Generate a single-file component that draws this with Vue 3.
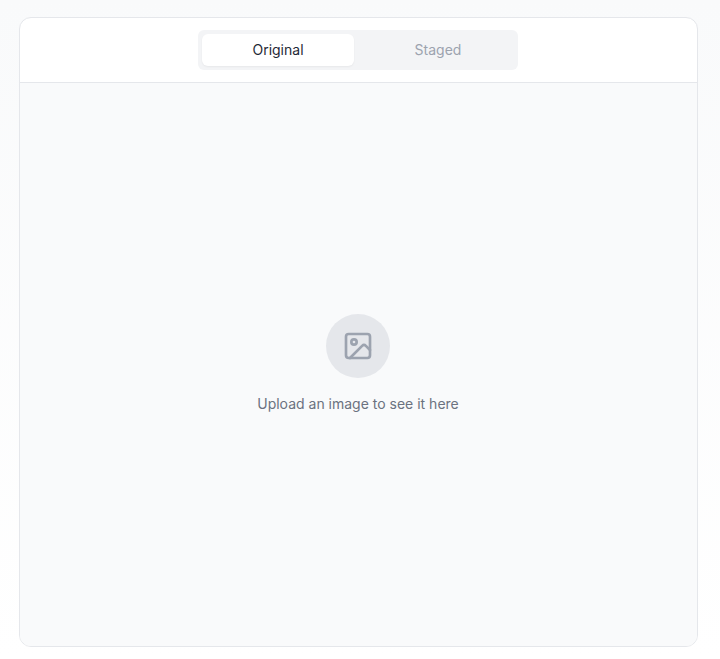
<script setup>
import { ref } from 'vue'

const view = ref('original')
</script>

<template>
  <main class="page">
    <section class="card">
      <header class="toolbar">
        <div class="tabs" role="tablist">
          <button
            type="button"
            role="tab"
            class="tab"
            :class="{ active: view === 'original' }"
            :aria-selected="view === 'original'"
            @click="view = 'original'"
          >Original</button>
          <button type="button" role="tab" class="tab" aria-selected="false" disabled>Staged</button>
        </div>
      </header>
      <div class="empty">
        <div class="badge">
          <svg viewBox="0 0 24 24" width="32" height="32" fill="none" stroke="currentColor" stroke-width="2" stroke-linecap="round" stroke-linejoin="round" aria-hidden="true">
            <rect x="3" y="3" width="18" height="18" rx="2" />
            <circle cx="9" cy="9" r="2" />
            <path d="m21 15-3.086-3.086a2 2 0 0 0-2.828 0L6 21" />
          </svg>
        </div>
        <p class="hint">Upload an image to see it here</p>
      </div>
    </section>
  </main>
</template>

<style>
body {
  margin: 0;
}
</style>

<style scoped>
.page {
  box-sizing: border-box;
  min-height: 100vh;
  display: flex;
  padding: 17px 22px 12px 19px;
  background: linear-gradient(to bottom, #f9fafb, #ffffff);
  font-family: Inter, "Liberation Sans", sans-serif;
  font-size: 14px;
  line-height: 20px;
}

.card {
  flex: 1;
  display: flex;
  flex-direction: column;
  overflow: hidden;
  border: 1px solid #e5e7eb;
  border-radius: 12px;
  background: #ffffff;
}

.toolbar {
  display: flex;
  justify-content: center;
  padding: 12px 13px 12px 12px;
  border-bottom: 1px solid #e5e7eb;
}

.tabs {
  box-sizing: border-box;
  display: grid;
  grid-template-columns: 1fr 1fr;
  gap: 8px;
  width: 100%;
  max-width: 320px;
  padding: 4px;
  border-radius: 6px;
  background: #f3f4f6;
}

.tab {
  padding: 6px 12px;
  border: 0;
  border-radius: 6px;
  background: transparent;
  color: #9ca3af;
  font: inherit;
}

.tab.active {
  background: #ffffff;
  color: #1f2937;
  box-shadow: 0 1px 2px rgb(0 0 0 / 5%);
}

.empty {
  flex: 1;
  display: flex;
  flex-direction: column;
  align-items: center;
  justify-content: center;
  gap: 16px;
  padding: 0 1px 1px 0;
  background: #f9fafb;
}

.badge {
  display: grid;
  place-items: center;
  width: 64px;
  height: 64px;
  border-radius: 50%;
  background: #e5e7eb;
  color: #9ca3af;
}

.hint {
  margin: 0;
  color: #6b7280;
}
</style>
